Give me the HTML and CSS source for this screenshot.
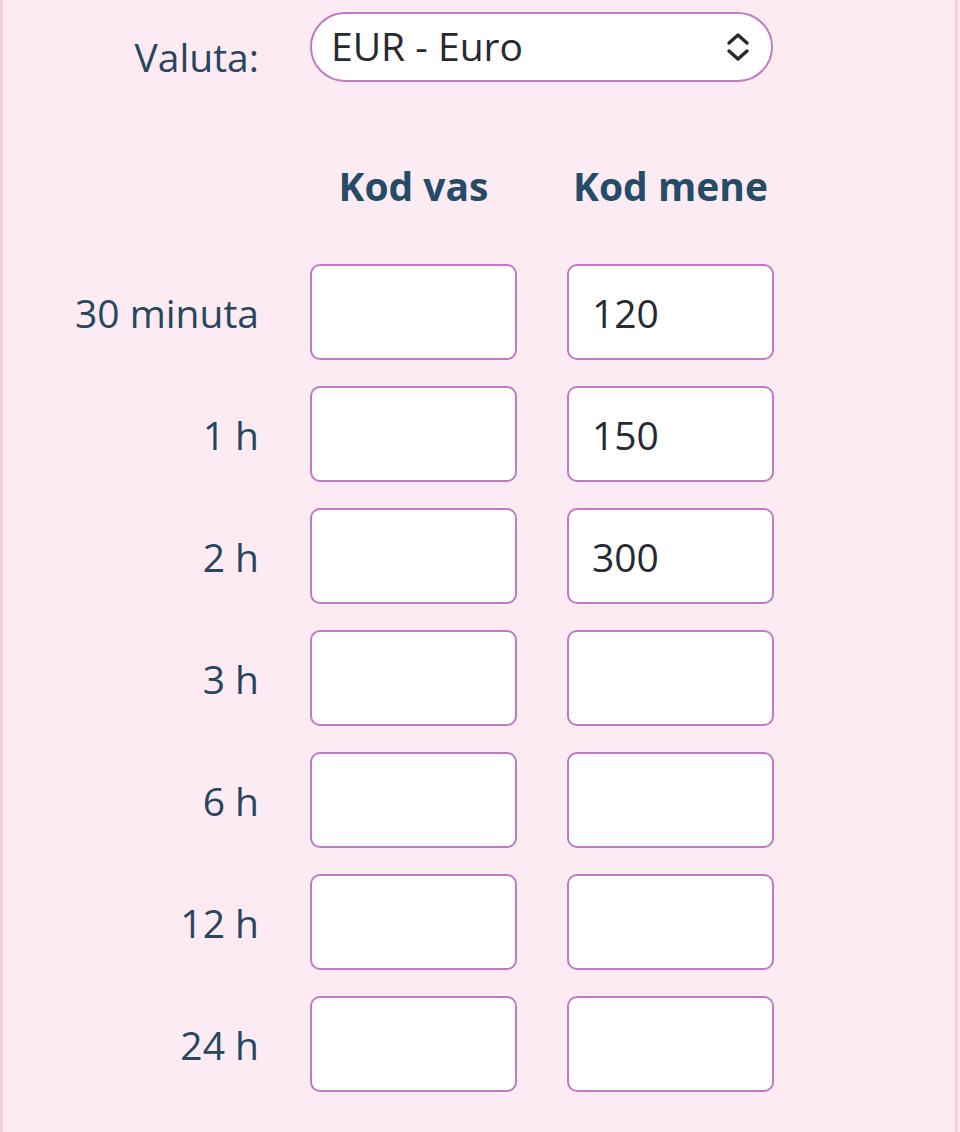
FILE: index.html
```html
<!DOCTYPE html>
<html lang="hr">
<head>
<meta charset="utf-8">
<title>Valuta</title>
<link rel="stylesheet" href="styles.css">
</head>
<body>
<div class="page">
  <div class="currency-row">
    <label class="row-label currency-label">Valuta:</label>
    <div class="select">
      <span class="select-text">EUR - Euro</span>
      <svg class="select-icon" width="26" height="30" viewBox="0 0 26 30" aria-hidden="true">
        <path d="M4 11 L13 3 L22 11" fill="none" stroke="#252b31" stroke-width="3.4" stroke-linecap="round" stroke-linejoin="round"/>
        <path d="M4 19 L13 27 L22 19" fill="none" stroke="#252b31" stroke-width="3.4" stroke-linecap="round" stroke-linejoin="round"/>
      </svg>
    </div>
  </div>

  <div class="grid">
    <div></div>
    <div class="col-head">Kod vas</div>
    <div class="col-head">Kod mene</div>

    <div class="row-label">30 minuta</div>
    <div class="box"></div>
    <div class="box">120</div>

    <div class="row-label">1 h</div>
    <div class="box"></div>
    <div class="box">150</div>

    <div class="row-label">2 h</div>
    <div class="box"></div>
    <div class="box">300</div>

    <div class="row-label">3 h</div>
    <div class="box"></div>
    <div class="box"></div>

    <div class="row-label">6 h</div>
    <div class="box"></div>
    <div class="box"></div>

    <div class="row-label">12 h</div>
    <div class="box"></div>
    <div class="box"></div>

    <div class="row-label">24 h</div>
    <div class="box"></div>
    <div class="box"></div>
  </div>
</div>
</body>
</html>
```

FILE: styles.css
```css
html, body {
  margin: 0;
  padding: 0;
  background: #fcebf2;
}

.page {
  box-sizing: border-box;
  min-height: 1132px;
  border-left: 3px solid #f4cfdd;
  border-right: 3px solid #f4cfdd;
  margin-right: 2px;
  font-family: "Open Sans", "Noto Sans", sans-serif;
  font-size: 39px;
  color: #28465e;
  padding-top: 12px;
}

.currency-row {
  display: grid;
  grid-template-columns: 257px 463px;
  column-gap: 50px;
  align-items: start;
}

.row-label {
  text-align: right;
  line-height: 53px;
  padding-right: 1px;
  color: #28465e;
}

.currency-label {
  line-height: 46px;
  padding-top: 22px;
}

.select {
  box-sizing: border-box;
  height: 70px;
  border: 2.5px solid #c07ac3;
  border-radius: 35px;
  background: #ffffff;
  display: flex;
  align-items: center;
  justify-content: space-between;
  padding: 0 20px 0 19px;
  color: #252b31;
}

.select-text {
  line-height: 52px;
  margin-top: -2px;
}

.select-icon {
  display: block;
}

.grid {
  display: grid;
  grid-template-columns: 257px 207px 207px;
  column-gap: 50px;
  row-gap: 26px;
  align-items: center;
  margin-top: 77px;
}

.col-head {
  font-weight: 700;
  text-align: center;
  color: #244b67;
  line-height: 53px;
  margin-bottom: 26px;
}

.box {
  box-sizing: border-box;
  height: 96px;
  border: 2.5px solid #c07ac3;
  border-radius: 10px;
  background: #ffffff;
  display: flex;
  align-items: center;
  padding-left: 23px;
  color: #252b31;
}
```
